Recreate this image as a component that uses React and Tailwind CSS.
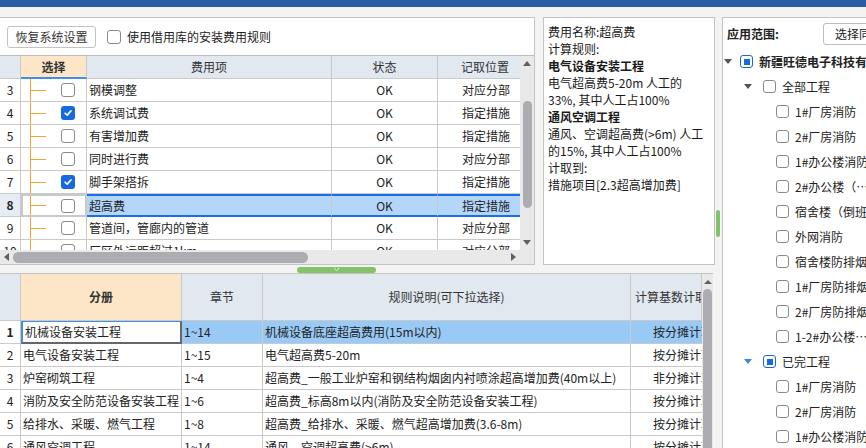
import React from 'react';

const font = "font-['Noto_Sans_CJK_SC','Noto_Sans',sans-serif]";

const feeRows = [
  { n: 3, name: '钢模调整', pos: '对应分部' },
  { n: 4, name: '系统调试费', pos: '指定措施', on: true },
  { n: 5, name: '有害增加费', pos: '指定措施' },
  { n: 6, name: '同时进行费', pos: '对应分部' },
  { n: 7, name: '脚手架搭拆', pos: '指定措施', on: true },
  { n: 8, name: '超高费', pos: '指定措施', sel: true },
  { n: 9, name: '管道间，管廊内的管道', pos: '对应分部' },
  { n: 10, name: '厂区外运距超过1km', pos: '对应分部' },
];

const ruleRows = [
  { n: 1, book: '机械设备安装工程', ch: '1~14', rule: '机械设备底座超高费用(15m以内)', base: '按分摊计取', sel: true },
  { n: 2, book: '电气设备安装工程', ch: '1~15', rule: '电气超高费5-20m', base: '按分摊计取' },
  { n: 3, book: '炉窑砌筑工程', ch: '1~4', rule: '超高费_一般工业炉窑和钢结构烟囱内衬喷涂超高增加费(40m以上)', base: '非分摊计取' },
  { n: 4, book: '消防及安全防范设备安装工程', ch: '1~6', rule: '超高费_标高8m以内(消防及安全防范设备安装工程)', base: '按分摊计取' },
  { n: 5, book: '给排水、采暖、燃气工程', ch: '1~8', rule: '超高费_给排水、采暖、燃气超高增加费(3.6-8m)', base: '按分摊计取' },
  { n: 6, book: '通风空调工程', ch: '1~14', rule: '通风、空调超高费(>6m)', base: '按分摊计取' },
];

const tree = [
  { lv: 0, text: '新疆旺德电子科技有限公司', state: 'partial', bold: true },
  { lv: 1, text: '全部工程' },
  { lv: 2, text: '1#厂房消防' },
  { lv: 2, text: '2#厂房消防' },
  { lv: 2, text: '1#办公楼消防' },
  { lv: 2, text: '2#办公楼（…' },
  { lv: 2, text: '宿舍楼（倒班楼）' },
  { lv: 2, text: '外网消防' },
  { lv: 2, text: '宿舍楼防排烟' },
  { lv: 2, text: '1#厂房防排烟' },
  { lv: 2, text: '2#厂房防排烟' },
  { lv: 2, text: '1-2#办公楼…' },
  { lv: 1, text: '已完工程', state: 'partial', blue: true },
  { lv: 2, text: '1#厂房消防' },
  { lv: 2, text: '2#厂房消防' },
  { lv: 2, text: '1#办公楼消防' },
];

function Box({ checked, partial, small }) {
  const size = small ? 'w-[13px] h-[13px]' : 'w-[14px] h-[14px]';
  if (checked) {
    return (
      <span className={`${size} shrink-0 rounded-[3px] bg-[#1668e3] flex items-center justify-center`}>
        <svg viewBox="0 0 12 12" className="w-[10px] h-[10px]" fill="none" stroke="white" strokeWidth="2" strokeLinecap="round" strokeLinejoin="round">
          <path d="M2.5 6.3 5 8.6 9.6 3.4" />
        </svg>
      </span>
    );
  }
  if (partial) {
    return (
      <span className={`${size} shrink-0 rounded-[3px] border border-[#1668e3] bg-white flex items-center justify-center`}>
        <span className="block w-[6px] h-[6px] bg-[#1668e3]" />
      </span>
    );
  }
  return <span className={`${size} block shrink-0 rounded-[3px] border border-[#8a8a8a] bg-white`} />;
}

function Tri({ blue }) {
  return (
    <span className={`block w-0 h-0 border-x-[4px] border-x-transparent border-t-[5px] ${blue ? 'border-t-[#3b86e0]' : 'border-t-[#555]'}`} />
  );
}

function UpperTable() {
  const cell = 'border-r border-b border-[#c9c9c9] flex items-center';
  return (
    <div className="flex flex-col flex-1 min-h-0">
      <div className="flex h-[194px]">
        <div className="w-[521px] overflow-hidden">
          <div className="grid grid-cols-[21px_66px_245px_106px_83px] h-[23px] bg-[#e1e8f0] text-[#333]">
            <div className={cell} />
            <div className="border-r border-[#c9c9c9] border-b-2 border-b-[#3d8fe8] bg-[#fde6c8] flex items-center justify-center font-bold">选择</div>
            <div className={`${cell} justify-center`}>费用项</div>
            <div className={`${cell} justify-center`}>状态</div>
            <div className={`${cell} justify-end pr-[11px]`}>记取位置</div>
          </div>
          {feeRows.map((r) => {
            const sel = r.sel;
            const rowBg = sel ? 'bg-[#b5d6fb] border-y-2 border-y-[#1a6ee8]' : 'border-b border-b-[#c9c9c9]';
            return (
              <div key={r.n} className="grid grid-cols-[21px_66px_245px_106px_83px] h-[23px]">
                <div className={`border-r border-b border-[#c9c9c9] flex items-center justify-center ${sel ? 'bg-[#e6ecf4] font-bold' : ''}`}>{r.n}</div>
                <div className={`flex items-center border-[#c9c9c9] ${sel ? 'bg-white border-2 border-[#1a6ee8]' : 'border-r border-b'}`}>
                  <span className={`${sel ? 'ml-[7px]' : 'ml-[9px]'} self-stretch w-[16px] flex items-center border-l border-[#f4a23c]`}>
                    <span className="block h-px w-full bg-[#f4a23c]" />
                  </span>
                  <span className="ml-[15px]"><Box checked={r.on} /></span>
                </div>
                <div className={`flex items-center pl-[2px] border-r border-r-[#c9c9c9] whitespace-nowrap ${rowBg}`}>{r.name}</div>
                <div className={`flex items-center justify-center border-r border-r-[#c9c9c9] ${rowBg}`}>OK</div>
                <div className={`flex items-center justify-end pr-[11px] ${rowBg}`}>{r.pos}</div>
              </div>
            );
          })}
        </div>
        <div className="w-[14px] bg-[#e9e9e9] flex flex-col items-center">
          <span className="block mt-[5px] w-0 h-0 border-x-[4px] border-x-transparent border-b-[5px] border-b-[#606060]" />
          <span className="block mt-[35px] w-[9px] h-[107px] rounded-full bg-[#abadb0]" />
          <span className="block mt-auto mb-[5px] w-0 h-0 border-x-[4px] border-x-transparent border-t-[5px] border-t-[#606060]" />
        </div>
      </div>
      <div className="flex h-[14px] bg-[#e9e9e9] items-center">
        <span className="block ml-[4px] w-0 h-0 border-y-[4px] border-y-transparent border-r-[5px] border-r-[#606060]" />
        <span className="block ml-[4px] w-[295px] h-[11px] rounded-full bg-[#abadb0]" />
        <span className="block ml-auto mr-[18px] w-0 h-0 border-y-[4px] border-y-transparent border-l-[5px] border-l-[#606060]" />
      </div>
    </div>
  );
}

function LowerTable() {
  const head = 'border-r border-b border-[#c9c9c9] flex items-center bg-[#e1e8f0]';
  return (
    <div className="w-[713px] flex-1 min-h-0 bg-white border-t border-[#c4c4c4] flex overflow-hidden">
      <div className="w-[702px] overflow-hidden">
        <div className="grid grid-cols-[21px_161px_81px_368px_71px] h-[47px] text-[#333]">
          <div className={head} />
          <div className="border-r border-b border-[#c9c9c9] flex items-center justify-center bg-[#fde6c8] font-bold">分册</div>
          <div className={`${head} justify-center`}>章节</div>
          <div className={`${head} justify-center`}>规则说明(可下拉选择)</div>
          <div className={`${head} pl-[4px] whitespace-nowrap overflow-hidden`}>计算基数计取方式</div>
        </div>
        {ruleRows.map((r) => {
          const bg = r.sel ? 'bg-[#99c9f5]' : '';
          return (
            <div key={r.n} className="grid grid-cols-[21px_161px_81px_368px_71px] h-[23px]">
              <div className={`border-r border-b border-[#c9c9c9] flex items-center justify-center ${r.sel ? 'font-bold' : ''}`}>{r.n}</div>
              <div className={`flex items-center pl-[2px] whitespace-nowrap overflow-hidden ${r.sel ? 'bg-white border-l-2 border-l-[#3d8fe8] border-t border-t-[#3d8fe8] border-r-2 border-r-[#666] border-b-2 border-b-[#666]' : 'border-r border-b border-[#c9c9c9]'}`}>{r.book}</div>
              <div className={`flex items-center pl-[2px] border-r border-b border-[#c9c9c9] ${bg}`}>{r.ch}</div>
              <div className={`flex items-center pl-[2px] pr-[3px] border-r border-b border-[#c9c9c9] ${bg}`}>
                <span className="truncate">{r.rule}</span>
              </div>
              <div className={`flex items-center pl-[22px] border-b border-[#c9c9c9] whitespace-nowrap overflow-hidden ${bg}`}>{r.base}</div>
            </div>
          );
        })}
      </div>
      <div className="w-[11px] bg-[#e9e9e9] flex flex-col items-center">
        <span className="block mt-[6px] w-0 h-0 border-x-[4px] border-x-transparent border-b-[4px] border-b-[#606060]" />
        <span className="block mt-[5px] w-[9px] flex-1 rounded-t-full bg-[#abadb0]" />
      </div>
    </div>
  );
}

function InfoPanel() {
  return (
    <div className="w-[172px] h-[248px] bg-white border border-[#c4c4c4] pt-[5px] px-[4px] text-[12px] leading-[17px] text-[#1a1a1a] whitespace-nowrap">
      <div>费用名称:超高费</div>
      <div>计算规则:</div>
      <div className="font-bold">电气设备安装工程</div>
      <div>电气超高费5-20m 人工的</div>
      <div>33%, 其中人工占100%</div>
      <div className="font-bold">通风空调工程</div>
      <div>通风、空调超高费(&gt;6m) 人工</div>
      <div>的15%, 其中人工占100%</div>
      <div>计取到:</div>
      <div>措施项目[2.3超高增加费]</div>
    </div>
  );
}

function ScopePanel() {
  return (
    <div className="flex-1 min-w-0 bg-white border-l border-t border-[#c4c4c4] overflow-hidden text-[12px] text-[#222]">
      <div className="h-[31px] flex items-center pl-[4px] whitespace-nowrap">
        <span className="w-[96px] shrink-0 font-bold">应用范围:</span>
        <span className="h-[22px] border border-[#bdbdbd] rounded-[3px] px-[11px] flex items-center bg-white">选择同类工程</span>
      </div>
      {tree.map((t, i) => (
        <div key={i} className={`h-[25px] flex items-center whitespace-nowrap ${t.lv === 0 ? 'pl-[1px]' : t.lv === 1 ? 'pl-[17px]' : 'pl-[53px]'}`}>
          {t.lv < 2 && (
            <span className="w-[16px] flex justify-center"><Tri blue={t.blue} /></span>
          )}
          <span className={t.lv === 0 ? 'ml-[8px]' : t.lv === 1 ? 'ml-[7px]' : ''}>
            <Box partial={t.state === 'partial'} small />
          </span>
          <span className={`ml-[6px] ${t.bold ? 'font-bold' : ''}`}>{t.text}</span>
        </div>
      ))}
    </div>
  );
}

export default function App() {
  return (
    <div className={`w-[866px] h-[448px] bg-[#f3f3f3] overflow-hidden flex flex-col text-[12px] text-[#222] ${font}`}>
      <div className="h-[7px] bg-[#2b5ca6] shrink-0" />
      <div className="h-[10px] shrink-0" />
      <div className="flex flex-1 min-h-0">
        <div className="w-[715px] flex flex-col">
          <div className="flex h-[248px]">
            <div className="w-[535px] bg-white border-t border-r border-b border-[#c4c4c4] flex flex-col">
              <div className="h-[38px] border-b border-[#bcbcbc] flex items-center pl-[7px]">
                <button className="h-[22px] w-[89px] border border-[#c3c3c3] rounded-[3px] bg-white text-[12px] text-[#333] flex items-center justify-center">恢复系统设置</button>
                <span className="ml-[11px]"><Box /></span>
                <span className="ml-[6px]">使用借用库的安装费用规则</span>
              </div>
              <UpperTable />
            </div>
            <div className="w-[8px]" />
            <InfoPanel />
          </div>
          <div className="h-[8px] shrink-0 flex">
            <span className="ml-[297px] mt-[2px] w-[79px] h-[6px] rounded-full bg-[#84c26c] flex justify-center">
              <svg viewBox="0 0 8 5" className="w-[7px] h-[5px]" fill="none" stroke="#e8f4e0" strokeWidth="1"><path d="M1 0.5 4 4 7 0.5" /></svg>
            </span>
          </div>
          <LowerTable />
        </div>
        <div className="w-[7px] shrink-0 flex flex-col">
          <span className="block mt-[193px] ml-[1px] w-[4px] h-[27px] rounded-full bg-[#84c26c]" />
        </div>
        <ScopePanel />
      </div>
    </div>
  );
}
